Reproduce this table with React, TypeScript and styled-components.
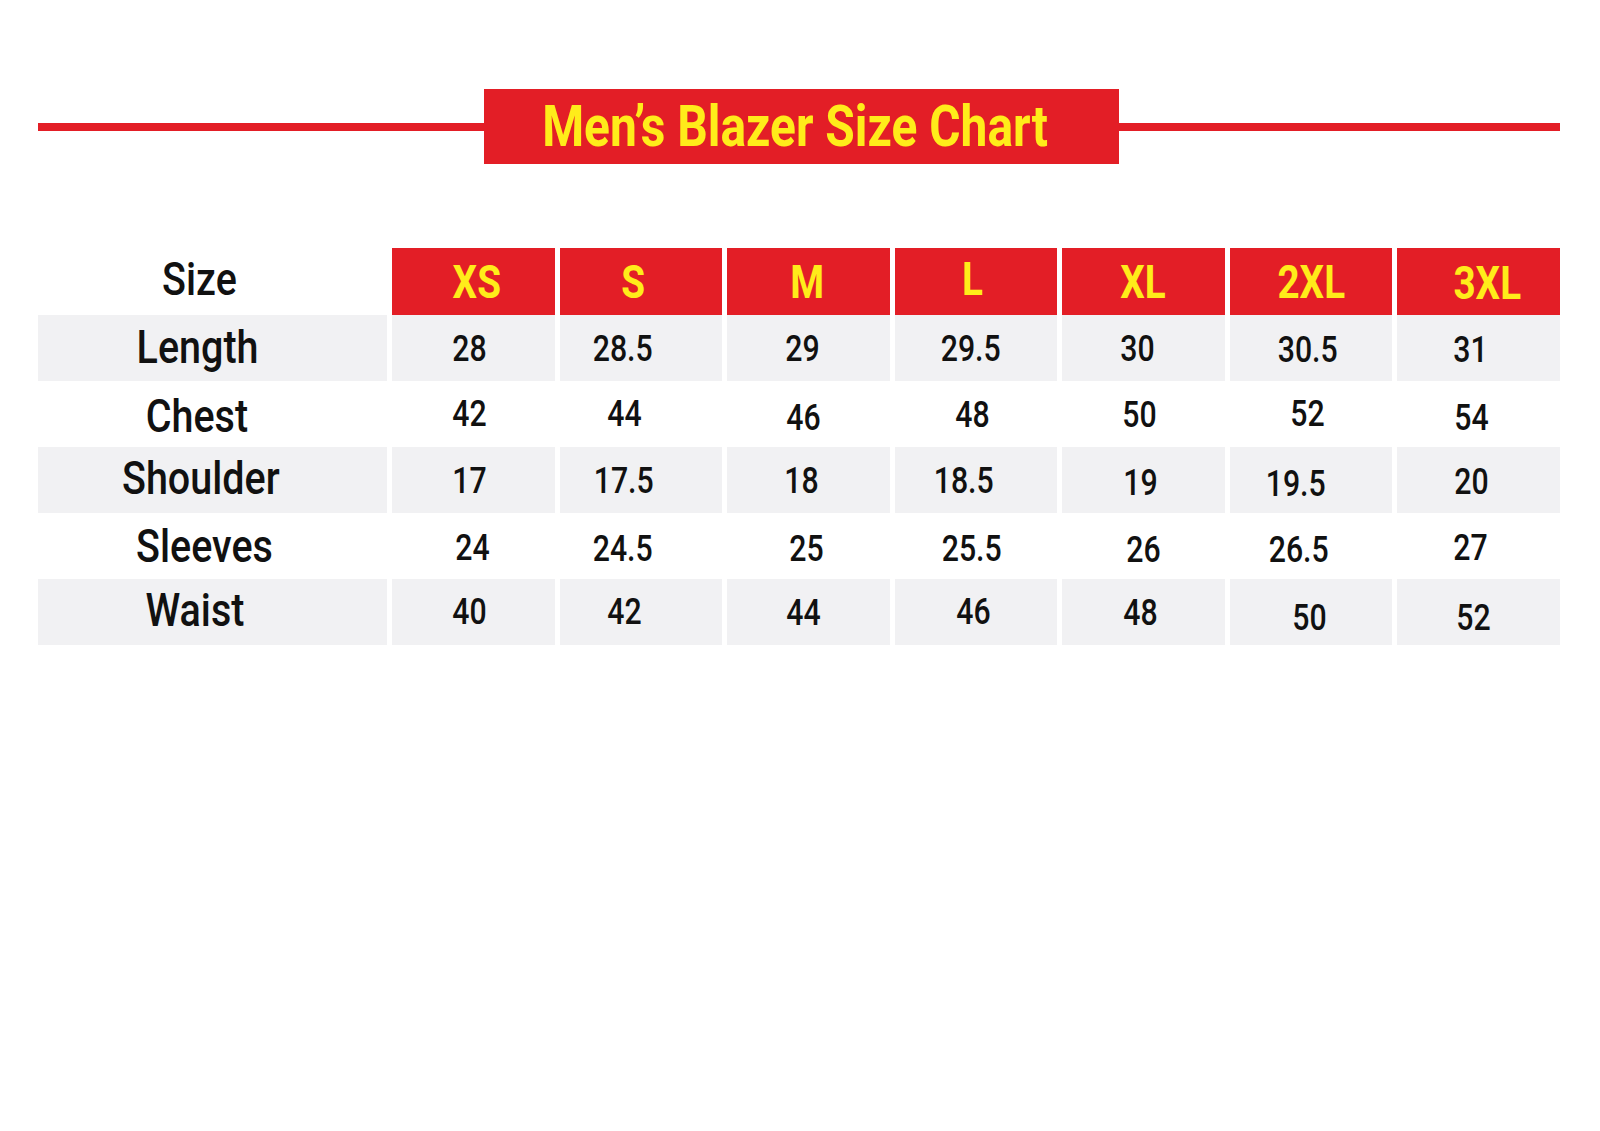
import React from "react";
import styled, { createGlobalStyle } from "styled-components";

const GlobalStyle = createGlobalStyle`
  html, body {
    margin: 0;
    padding: 0;
    background: #ffffff;
  }
  body {
    font-family: Roboto, "Liberation Sans", Arial, sans-serif;
    color: #111111;
  }
`;

const RED = "#e31e26";
const YELLOW = "#ffec1a";
const GRAY = "#f1f1f3";

const Page = styled.div`
  width: 1600px;
  height: 1131px;
  box-sizing: border-box;
  padding: 89px 40px 0 38px;
  background: #ffffff;
`;

const TitleRow = styled.div`
  display: flex;
  align-items: center;
  width: 1522px;
`;

const Rule = styled.div<{ $w: number }>`
  width: ${(p) => p.$w}px;
  height: 8px;
  background: ${RED};
`;

const Banner = styled.div`
  width: 635px;
  height: 75px;
  background: ${RED};
  display: flex;
  align-items: center;
  justify-content: center;
  padding-right: 12px;
  box-sizing: border-box;
`;

const Squeeze = styled.span<{ $dx?: number; $dy?: number }>`
  display: inline-block;
  white-space: nowrap;
  padding: 4px 6px;
  transform: translate(${(p) => p.$dx ?? 0}px, ${(p) => p.$dy ?? 0}px) scaleX(0.84);
`;

const Title = styled(Squeeze)`
  font-size: 57px;
  font-weight: 700;
  color: ${YELLOW};
  line-height: 1;
`;

const Table = styled.div`
  margin-top: 84px;
  width: 1522px;
  display: grid;
  grid-template-columns: 349px repeat(7, 1fr);
  grid-template-rows: 67px repeat(5, 66px);
  column-gap: 5px;
`;

const Cell = styled.div<{ $bg: "red" | "gray" | "none" }>`
  display: flex;
  align-items: center;
  justify-content: center;
  min-width: 0;
  background: ${(p) => (p.$bg === "red" ? RED : p.$bg === "gray" ? GRAY : "transparent")};
`;

const HeadText = styled(Squeeze)`
  font-size: 46px;
  font-weight: 700;
  color: ${YELLOW};
  line-height: 1;
`;

const LabelText = styled(Squeeze)`
  font-size: 47px;
  font-weight: 500;
  color: #111111;
  line-height: 1;
`;

const ValueText = styled(Squeeze)`
  font-size: 36px;
  font-weight: 500;
  color: #111111;
  line-height: 1;
`;

const sizes = ["XS", "S", "M", "L", "XL", "2XL", "3XL"];
const headOffsets: [number, number][] = [
  [3, 0], [-8, 0], [-1, 0], [-4, -3], [-1, 0], [0, 0], [9, 1],
];

type Row = {
  label: string;
  lx: number;
  ly: number;
  values: [string, number, number][];
};

const rows: Row[] = [
  {
    label: "Length",
    lx: -15,
    ly: -2,
    values: [
      ["28", -4, 1], ["28.5", -18, 1], ["29", -6, 1], ["29.5", -5, 1],
      ["30", -6, 1], ["30.5", -3, 2], ["31", -8, 2],
    ],
  },
  {
    label: "Chest",
    lx: -16,
    ly: 1,
    values: [
      ["42", -4, 0], ["44", -16, 0], ["46", -5, 4], ["48", -4, 1],
      ["50", -4, 1], ["52", -4, 0], ["54", -7, 4],
    ],
  },
  {
    label: "Shoulder",
    lx: -12,
    ly: -3,
    values: [
      ["17", -4, 1], ["17.5", -17, 1], ["18", -7, 1], ["18.5", -12, 1],
      ["19", -3, 3], ["19.5", -15, 4], ["20", -7, 2],
    ],
  },
  {
    label: "Sleeves",
    lx: -8,
    ly: -1,
    values: [
      ["24", -1, 2], ["24.5", -18, 3], ["25", -2, 3], ["25.5", -4, 3],
      ["26", 0, 4], ["26.5", -12, 4], ["27", -8, 2],
    ],
  },
  {
    label: "Waist",
    lx: -18,
    ly: -3,
    values: [
      ["40", -4, 0], ["42", -16, 0], ["44", -5, 1], ["46", -3, 0],
      ["48", -3, 1], ["50", -2, 6], ["52", -5, 6],
    ],
  },
];

export default function App() {
  return (
    <>
      <GlobalStyle />
      <Page>
        <TitleRow>
          <Rule $w={446} />
          <Banner>
            <Title>Men’s Blazer Size Chart</Title>
          </Banner>
          <Rule $w={441} />
        </TitleRow>

        <Table>
          <Cell $bg="none">
            <LabelText $dx={-13} $dy={-3}>Size</LabelText>
          </Cell>
          {sizes.map((s, i) => (
            <Cell key={s} $bg="red">
              <HeadText $dx={headOffsets[i][0]} $dy={headOffsets[i][1]}>{s}</HeadText>
            </Cell>
          ))}

          {rows.map((r, ri) => {
            const bg = ri % 2 === 0 ? "gray" : "none";
            return (
              <React.Fragment key={r.label}>
                <Cell $bg={bg}>
                  <LabelText $dx={r.lx} $dy={r.ly}>{r.label}</LabelText>
                </Cell>
                {r.values.map(([v, dx, dy], ci) => (
                  <Cell key={ci} $bg={bg}>
                    <ValueText $dx={dx} $dy={dy}>{v}</ValueText>
                  </Cell>
                ))}
              </React.Fragment>
            );
          })}
        </Table>
      </Page>
    </>
  );
}
